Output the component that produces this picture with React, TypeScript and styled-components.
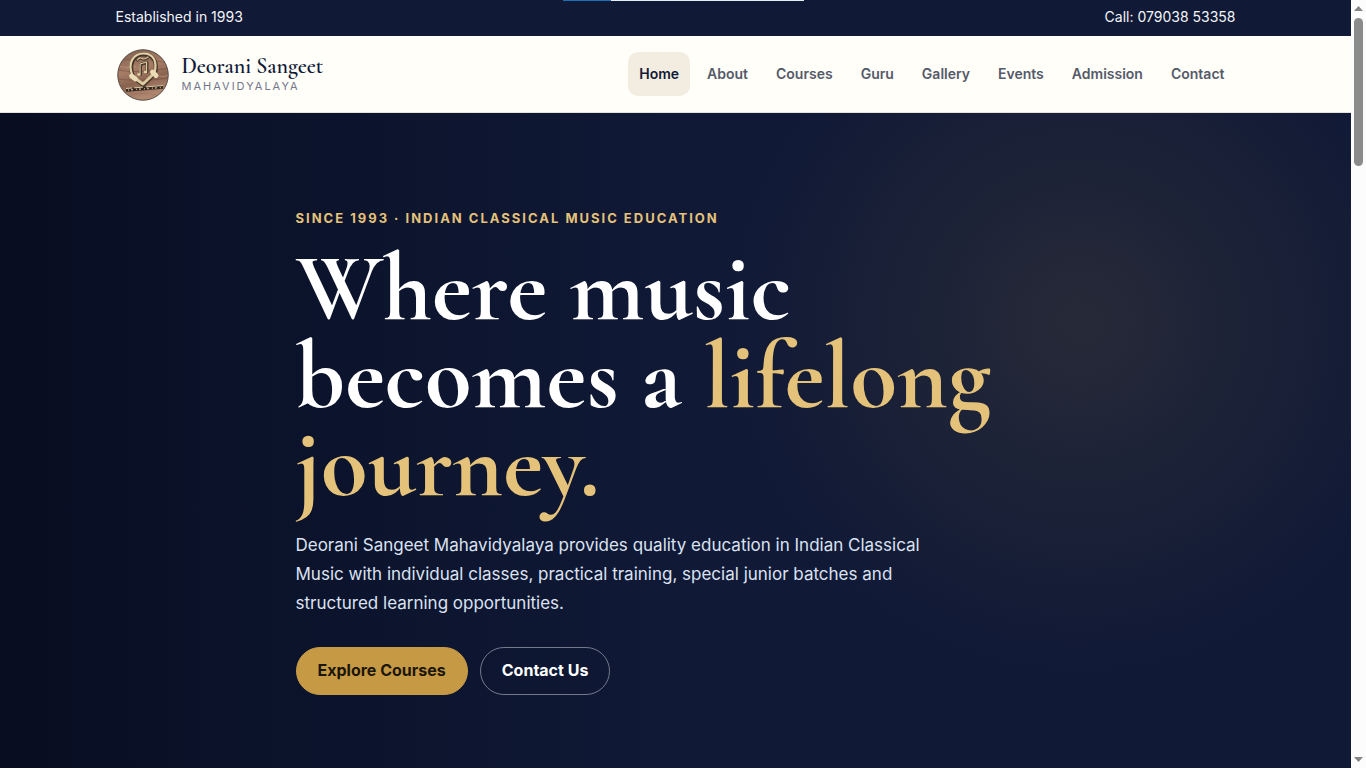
import React from "react";
import styled, { createGlobalStyle } from "styled-components";

const GlobalStyle = createGlobalStyle`
  *, *::before, *::after { box-sizing: border-box; }
  html, body { margin: 0; }
  body {
    background: #fffef9;
    font-family: Inter, "Liberation Sans", sans-serif;
    font-size: 14px;
    overflow: hidden;
  }
  a { color: inherit; text-decoration: none; }
`;

const Shell = styled.div`
  display: flex;
  min-height: 100vh;
`;

const Page = styled.div`
  flex: 1;
  min-width: 0;
  display: flex;
  flex-direction: column;
`;

const Container = styled.div`
  width: 100%;
  max-width: 1120px;
  margin: 0 auto;
  display: flex;
  align-items: center;
  justify-content: space-between;
`;

const TopBar = styled.div`
  background: #101936;
  color: #f4f5f8;
  padding: 6px 0 8px;
  line-height: 22px;
`;

const LoadingBar = styled.div`
  position: absolute;
  top: 0;
  left: 563px;
  width: 241px;
  height: 1px;
  background: linear-gradient(90deg, #1f6fb5 20%, #e3edf2 20%);
`;

const Header = styled.header`
  background: #fffef9;
  border-bottom: 1px solid #e4e3e0;
  padding: 10px 0;
`;

const Brand = styled.a`
  display: flex;
  align-items: center;
  gap: 10px;
`;

const Emblem = styled.svg`
  width: 56px;
  height: 56px;
`;

const BrandText = styled.span`
  display: flex;
  flex-direction: column;
`;

const BrandName = styled.strong`
  font-family: "Cormorant Garamond", "Liberation Serif", serif;
  font-size: 22px;
  line-height: 24px;
  font-weight: 600;
  color: #101936;
`;

const BrandSub = styled.span`
  font-size: 11px;
  line-height: 16px;
  letter-spacing: 2px;
  color: #72778a;
`;

const Nav = styled.nav`
  display: flex;
  gap: 6px;
`;

const NavLink = styled.a<{ $active?: boolean }>`
  padding: 11px;
  border-radius: 10px;
  font-size: 14px;
  line-height: 22px;
  font-weight: 600;
  color: ${(p) => (p.$active ? "#101936" : "#555a69")};
  background: ${(p) => (p.$active ? "#f3ede1" : "transparent")};
`;

const Hero = styled.main`
  flex: 1;
  padding: 94px 0 72px;
  background:
    radial-gradient(circle 350px at 80% 32%, rgba(200, 165, 70, 0.12), rgba(200, 165, 70, 0)),
    linear-gradient(90deg, #080d21 0%, #0b132b 20%, #101936 52%, #101936 100%);
`;

const HeroContent = styled.section`
  max-width: 760px;
  margin: 0 auto;
`;

const Eyebrow = styled.p`
  margin: 0 0 16px;
  font-size: 13px;
  line-height: 22px;
  font-weight: 700;
  letter-spacing: 2px;
  color: #e5c27a;
`;

const Title = styled.h1`
  margin: 0;
  font-family: "Cormorant Garamond", "Liberation Serif", serif;
  font-size: 96px;
  line-height: 88px;
  font-weight: 700;
  color: #fff;
`;

const Accent = styled.span`
  color: #e5c27a;
`;

const Lead = styled.p`
  max-width: 650px;
  margin: 22px 0 29px;
  font-size: 17px;
  line-height: 29px;
  color: #dce2f2;
`;

const Actions = styled.div`
  display: flex;
  gap: 12px;
`;

const Action = styled.a<{ $primary?: boolean }>`
  padding: 11px 21px 13px;
  border: 1px solid ${(p) => (p.$primary ? "#c69a45" : "#747a8c")};
  border-radius: 24px;
  background: ${(p) => (p.$primary ? "#c69a45" : "transparent")};
  color: ${(p) => (p.$primary ? "#1b1609" : "#fff")};
  font-size: 16px;
  line-height: 22px;
  font-weight: 700;
`;

const ScrollTrack = styled.div`
  width: 15px;
  height: 100vh;
  display: flex;
  flex-direction: column;
  align-items: center;
  justify-content: space-between;
  padding: 6px 0;
  background: #fcfcfc;
`;

const ScrollTop = styled.div`
  display: flex;
  flex-direction: column;
  align-items: center;
  gap: 7px;
`;

const Thumb = styled.div`
  width: 9px;
  height: 148px;
  border-radius: 5px;
  background: #8b8b8b;
`;

const Arrow = styled.svg`
  display: block;
  width: 9px;
  height: 5px;
  fill: #858585;
`;

const links = ["Home", "About", "Courses", "Guru", "Gallery", "Events", "Admission", "Contact"];

function Logo() {
  return (
    <Emblem viewBox="0 0 56 56" aria-hidden="true">
      <defs>
        <linearGradient id="wood" x1="0" y1="0" x2="0.3" y2="1">
          <stop offset="0" stopColor="#7d5d4c" />
          <stop offset="0.45" stopColor="#a77d66" />
          <stop offset="0.7" stopColor="#8a6350" />
          <stop offset="1" stopColor="#b28770" />
        </linearGradient>
        <clipPath id="disc"><circle cx="27" cy="29" r="25" /></clipPath>
      </defs>
      <circle cx="27" cy="29" r="25.500" fill="url(#wood)" />
      <g clipPath="url(#disc)" fill="none">
        <path d="M2 15q18-5 50 2M2 24q20 4 52-2M2 33q20 3 52-1M3 49q24-5 48 2" stroke="#6d4b3d" strokeWidth="1" opacity=".5" />
        <path d="M2 20q12 3 18 0M38 29q9 3 16 0M9 48q16-3 36 1" stroke="#c19a80" strokeWidth="1" opacity=".6" />
      </g>
      <g fill="none" strokeLinecap="round" strokeLinejoin="round">
        <path d="M17.500 31C11.500 18 18 8.500 27.500 8.500 37.500 8.500 42 16 39 28" stroke="#47352a" strokeWidth="4" />
        <path d="M16.500 29.500C11 17 17.500 7.500 27.500 7.500 37.500 7.500 41.500 15 38.500 27" stroke="#e2d2a8" strokeWidth="2.200" />
        <path d="M19 33l8.500 6.500L38.500 28" stroke="#49372b" strokeWidth="3.500" />
        <path d="M18 31.500l9 6.500L38 27.500" stroke="#dccba0" strokeWidth="2.800" />
        <path d="M15.500 30l4 3M36.500 26l3.500 3.500" stroke="#eadcb5" strokeWidth="4.800" />
        <path d="M24.500 28.500v-10l6.500-2v9.500" stroke="#493a2e" strokeWidth="3" />
        <path d="M24 27.500v-9.500l6.500-2v9" stroke="#dcca9b" strokeWidth="1.200" />
        <path d="M22.500 28.500h1M29 26h1" stroke="#e0cf9f" strokeWidth="2.600" />
        <path d="M21.500 14.500q2-3 4.500-1.500t6-1.500" stroke="#493a2e" strokeWidth="2.400" />
        <path d="M21.500 14q2-3 4.500-1.500t6-1.500" stroke="#d8c596" strokeWidth="1.200" />
      </g>
      <path d="M10 44l37-3" stroke="#33271f" strokeWidth="3.500" />
      <path d="M10 42.500l37-3" stroke="#d9c8a3" strokeWidth="1" strokeDasharray="6 2 9 3 12 0" />
      <path d="M12 44l33-2.500" stroke="#baa381" strokeWidth="1.500" strokeDasharray="1 2 2 3" />
      <circle cx="27" cy="29" r="25.200" fill="none" stroke="#5e5751" strokeWidth="1" />
    </Emblem>
  );
}

export default function App() {
  return (
    <Shell>
      <GlobalStyle />
      <LoadingBar />
      <Page>
        <TopBar>
          <Container>
            <span>Established in 1993</span>
            <a href="tel:07903853358">Call: 079038 53358</a>
          </Container>
        </TopBar>
        <Header>
          <Container>
            <Brand href="#home">
              <Logo />
              <BrandText>
                <BrandName>Deorani Sangeet</BrandName>
                <BrandSub>MAHAVIDYALAYA</BrandSub>
              </BrandText>
            </Brand>
            <Nav aria-label="Main">
              {links.map((label, i) => (
                <NavLink key={label} href={`#${label.toLowerCase()}`} $active={i === 0}>
                  {label}
                </NavLink>
              ))}
            </Nav>
          </Container>
        </Header>
        <Hero>
          <HeroContent>
            <Eyebrow>SINCE 1993 · INDIAN CLASSICAL MUSIC EDUCATION</Eyebrow>
            <Title>
              Where music becomes a <Accent>lifelong journey.</Accent>
            </Title>
            <Lead>
              Deorani Sangeet Mahavidyalaya provides quality education in Indian Classical Music with
              individual classes, practical training, special junior batches and structured learning
              opportunities.
            </Lead>
            <Actions>
              <Action href="#courses" $primary>Explore Courses</Action>
              <Action href="#contact">Contact Us</Action>
            </Actions>
          </HeroContent>
        </Hero>
      </Page>
      <ScrollTrack aria-hidden="true">
        <ScrollTop>
          <Arrow viewBox="0 0 9 5"><path d="M4.500 0L9 5H0z" /></Arrow>
          <Thumb />
        </ScrollTop>
        <Arrow viewBox="0 0 9 5"><path d="M0 0h9L4.500 5z" /></Arrow>
      </ScrollTrack>
    </Shell>
  );
}
